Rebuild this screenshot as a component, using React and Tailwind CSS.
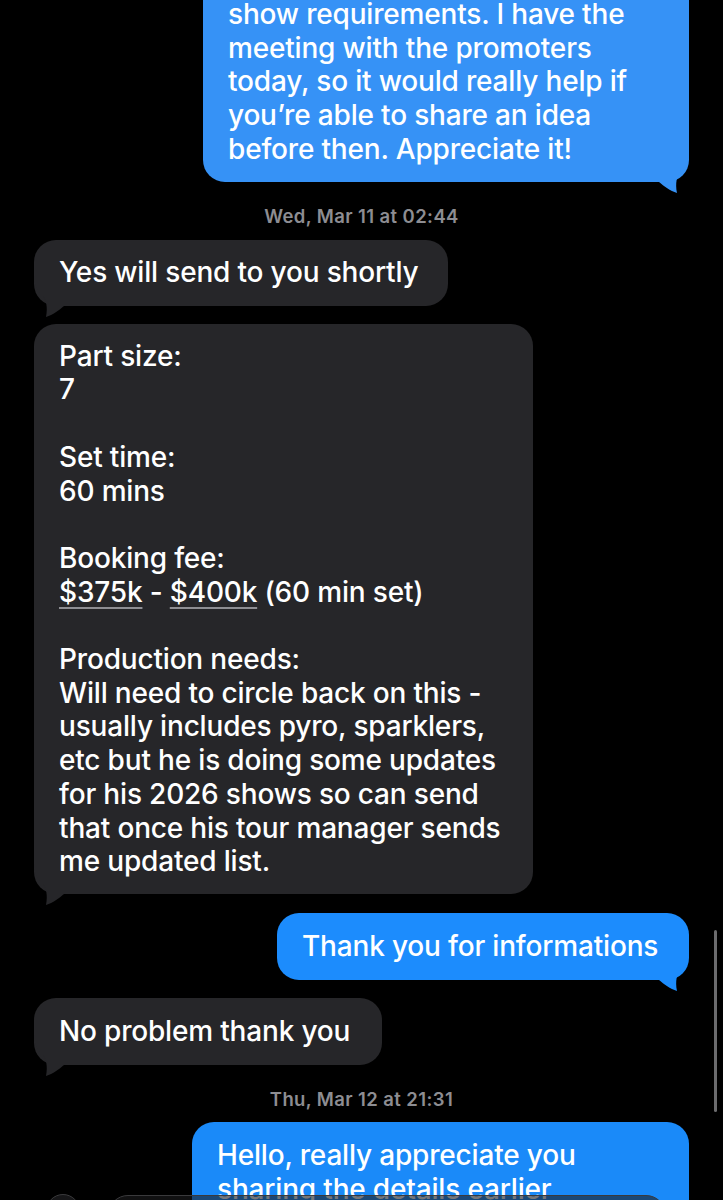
import React from 'react';

// Hooked tail drawn at the bottom corner of the last bubble in a group.
function Tail({ side, color }) {
  const pos = side === 'right' ? 'right-0' : 'left-0 -scale-x-100';
  return (
    <svg
      className={`absolute bottom-[-12px] ${pos} h-[42px] w-[30px]`}
      viewBox="0 0 30 42"
      aria-hidden="true"
    >
      <path
        d="M0 0 L30 0 C30 9 27 15 21 20 C18 24 16 31 18 41 C11 39 5 34 0 30 Z"
        fill={color}
      />
    </svg>
  );
}

function Bubble({ side = 'left', color, width, tail, className = '', children }) {
  const align = side === 'right' ? 'self-end' : 'self-start';
  return (
    <div
      className={`relative ${align} rounded-[22px] px-[25px] text-white whitespace-nowrap ${width} ${color.bg} ${className}`}
    >
      {tail && <Tail side={side} color={color.hex} />}
      <div className="relative">{children}</div>
    </div>
  );
}

function Stamp({ children, className = '' }) {
  return (
    <div className={`text-center text-[18.5px] leading-[20px] font-semibold tracking-[0.4px] text-[#8d8d92] ${className}`}>
      {children}
    </div>
  );
}

const grey = { bg: 'bg-[#262629]', hex: '#262629' };
const blueTop = { bg: 'bg-[#3692f6]', hex: '#3692f6' };
const blue = { bg: 'bg-[#1c8cfd]', hex: '#1c8cfd' };
const blueLow = { bg: 'bg-[#1a8af9]', hex: '#1a8af9' };

const Fee = ({ children }) => (
  <span className="underline decoration-[#8e8e93] decoration-2 underline-offset-[5px]">{children}</span>
);

export default function App() {
  return (
    <div
      className="relative h-[1200px] w-[723px] overflow-hidden bg-black"
      style={{ fontFamily: 'Inter, "Noto Sans", sans-serif' }}
    >
      <div className="flex flex-col px-[34px] text-[28px] font-medium leading-[33.7px] tracking-[-0.18px]">
        {/* outgoing, scrolled partly off the top */}
        <Bubble side="right" color={blueTop} width="w-[486px]" tail className="mt-[-40px] pt-[38px] pb-[15px]">
          show requirements. I have the<br />
          meeting with the promoters<br />
          today, so it would really help if<br />
          you’re able to share an idea<br />
          before then. Appreciate it!
        </Bubble>

        <Stamp className="mt-[24px]">Wed, Mar 11 at 02:44</Stamp>

        <Bubble color={grey} width="w-[414px]" tail className="mt-[14px] py-[16.5px]">
          Yes will send to you shortly
        </Bubble>

        <Bubble color={grey} width="w-[499px]" tail className="mt-[18px] py-[15.5px]">
          Part size:<br />
          7<br />
          <br />
          Set time:<br />
          60 mins<br />
          <br />
          Booking fee:<br />
          <Fee>$375k</Fee> - <Fee>$400k</Fee> (60 min set)<br />
          <br />
          Production needs:<br />
          Will need to circle back on this -<br />
          usually includes pyro, sparklers,<br />
          etc but he is doing some updates<br />
          for his 2026 shows so can send<br />
          that once his tour manager sends<br />
          me updated list.
        </Bubble>

        <Bubble side="right" color={blue} width="w-[412px]" tail className="mt-[19px] py-[16.5px]">
          Thank you for informations
        </Bubble>

        <Bubble color={grey} width="w-[348px]" tail className="mt-[18px] py-[16.5px]">
          No problem thank you
        </Bubble>

        <Stamp className="mt-[24px]">Thu, Mar 12 at 21:31</Stamp>

        <Bubble side="right" color={blueLow} width="w-[497px]" className="mt-[13px] pt-[17px] pb-[15px]">
          Hello, really appreciate you<br />
          sharing the details earlier
        </Bubble>
      </div>

      {/* scroll indicator */}
      <div className="absolute left-[714px] top-[930px] h-[182px] w-[3px] rounded-full bg-[#6c6c6e]" />

      {/* top of the compose bar peeking in */}
      <div className="absolute left-[46px] top-[1194px] h-[34px] w-[34px] rounded-full border border-[#3a3a3c] bg-[#1c1c1e]/80" />
      <div className="absolute left-[108px] top-[1195px] h-[40px] w-[558px] rounded-full border border-[#3a3a3c] bg-[#1c1c1e]/60" />
    </div>
  );
}
